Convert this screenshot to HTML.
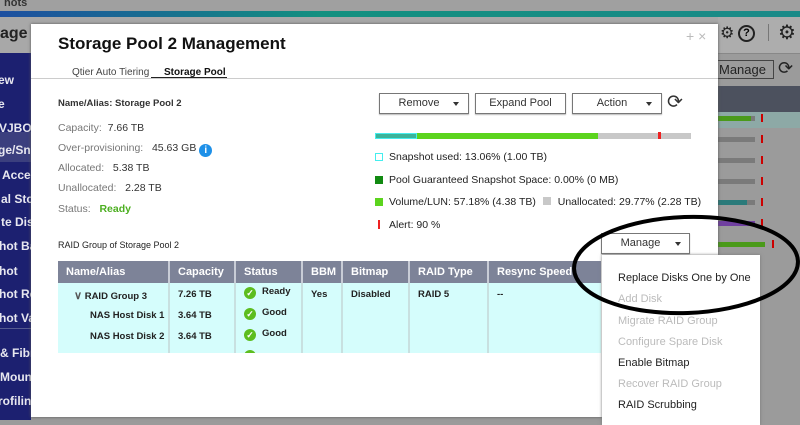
<!DOCTYPE html>
<html><head><style>
*{margin:0;padding:0;box-sizing:border-box}
body{width:800px;height:420px;overflow:hidden;position:relative;font-family:"Liberation Sans",sans-serif;background:#9b9b9b}
.a{position:absolute}
.side{overflow:hidden}
.side div{position:absolute;left:0;color:#e8e8f0;font-size:12px;font-weight:bold;white-space:nowrap}
.btn{position:absolute;height:21px;border:1px solid #777;background:#fff;font-size:11px;color:#333;text-align:center;line-height:19px;box-shadow:0 1px 1px #bbb}
.tri{display:inline-block;width:0;height:0;border-left:3px solid transparent;border-right:3px solid transparent;border-top:4px solid #333;position:absolute;top:8px}
.lbl{position:absolute;font-size:10.5px;color:#777;white-space:nowrap}
.val{color:#333}
.lg{position:absolute;font-size:10.5px;color:#222;left:389px;white-space:nowrap}
.sq{position:absolute;left:375px;width:8px;height:8px}
th{background:#7d8398;color:#fff;font-size:11px;font-weight:bold;text-align:left;height:22px;padding-left:8px;border-right:2px solid #c8ccd6;white-space:nowrap}
td{font-size:9.5px;font-weight:bold;color:#222;vertical-align:top;padding:6px 0 0 8px;white-space:nowrap;height:21px;border-right:2px solid #c8e0e0}
.mi{position:absolute;left:16px;font-size:11px;color:#222}
.dis{color:#bbb}
.ck{display:inline-block;width:12px;height:12px;border-radius:50%;background:#5cbd1e;color:#fff;font-size:9px;text-align:center;line-height:12px;margin-right:6px;vertical-align:-2px}
.rb{position:absolute;left:718px;height:5px;background:#7a7a7a;width:37px}
</style></head><body>
<div class="a" style="left:0;top:0;width:800px;height:11px;background:#a0a0a0"></div>
<div class="a" style="left:4px;top:-3px;font-size:11px;color:#333;font-weight:bold">hots</div>
<div class="a" style="left:0;top:11px;width:800px;height:6px;background:linear-gradient(90deg,#1d4fa0,#139080 40%,#1a8a88)"></div>
<div class="a" style="left:0;top:17px;width:800px;height:36px;background:#a8a8a8"></div>
<div class="a" style="left:0;top:25px;font-size:16px;color:#222;font-weight:bold">age &amp;</div>
<div class="a" style="left:718px;top:17px;width:82px;height:36px;background:#adadad"></div>
<div class="a" style="left:720px;top:23px;font-size:16px;color:#222">⚙</div>
<div class="a" style="left:738px;top:25px;width:17px;height:17px;border:2px solid #222;border-radius:50%;font-size:11px;text-align:center;line-height:13px;font-weight:bold">?</div>
<div class="a" style="left:768px;top:24px;width:1px;height:17px;background:#777"></div>
<div class="a" style="left:778px;top:20px;font-size:20px;color:#222">⚙</div>
<div class="a" style="left:718px;top:53px;width:82px;height:1px;background:#888"></div>
<div class="a" style="left:700px;top:60px;width:74px;height:19px;border:1px solid #444;font-size:13px;color:#222;padding-left:18px;line-height:17px">Manage</div>
<div class="a" style="left:778px;top:58px;font-size:18px;color:#222">⟳</div>
<div class="a" style="left:718px;top:86px;width:82px;height:26px;background:#4c515e"></div>
<div class="a" style="left:718px;top:112px;width:82px;height:16px;background:#8da9a6"></div>
<div class="rb" style="top:116px"></div><div class="a" style="left:718px;top:116px;width:33px;height:5px;background:#4a9a1a"></div>
<div class="rb" style="top:137px"></div><div class="rb" style="top:158px"></div><div class="rb" style="top:179px"></div><div class="rb" style="top:200px"></div><div class="rb" style="top:221px"></div><div class="rb" style="top:242px"></div>
<div class="a" style="left:718px;top:200px;width:29px;height:5px;background:#2a7a7a"></div>
<div class="a" style="left:718px;top:221px;width:37px;height:5px;background:#7040a0"></div>
<div class="a" style="left:718px;top:242px;width:47px;height:5px;background:#4a9a1a"></div>
<div class="a" style="left:761px;top:114px;width:2px;height:8px;background:#c00"></div>
<div class="a" style="left:761px;top:135px;width:2px;height:8px;background:#c00"></div>
<div class="a" style="left:761px;top:156px;width:2px;height:8px;background:#c00"></div>
<div class="a" style="left:761px;top:177px;width:2px;height:8px;background:#c00"></div>
<div class="a" style="left:761px;top:198px;width:2px;height:8px;background:#c00"></div>
<div class="a" style="left:761px;top:219px;width:2px;height:8px;background:#c00"></div>
<div class="a" style="left:772px;top:240px;width:2px;height:8px;background:#c00"></div>
<div class="a side" style="left:0;top:53px;width:31px;height:367px;background:#1c2070">
<div style="top:79px;left:0;width:31px;height:30px;background:#3b3f7e"></div>
<div style="top:20px;left:-2px">ew</div><div style="top:44px;left:-2px">e</div><div style="top:68px;left:-1px">VJBOD</div>
<div style="top:90px;left:-2px">ge/Snap</div><div style="top:115px;left:2px">Accele</div><div style="top:139px;left:1px">al Stor</div>
<div style="top:162px;left:1px">te Disk</div><div style="top:186px;left:-1px">hot Bac</div><div style="top:211px;left:-1px">hot</div>
<div style="top:234px;left:-1px">hot Re</div><div style="top:258px;left:-1px">hot Va</div>
<div style="top:275px;width:31px;height:1px;background:#555a90"></div>
<div style="top:293px;left:0">&amp; Fibre</div><div style="top:317px;left:0">Mount</div><div style="top:341px;left:-2px">rofiling</div>
</div>
<div class="a" style="left:31px;top:24px;width:687px;height:393px;background:#fff;box-shadow:0 0 3px #555"></div>
<div class="a" style="left:58px;top:34px;font-size:17px;font-weight:bold;color:#111">Storage Pool 2 Management</div>
<div class="a" style="left:686px;top:28px;font-size:14px;color:#bbb">+ ×</div>
<div class="a" style="left:72px;top:67px;font-size:10px;color:#444">Qtier Auto Tiering</div>
<div class="a" style="left:164px;top:67px;font-size:10px;color:#111;font-weight:bold">Storage Pool</div>
<div class="a" style="left:151px;top:77px;width:76px;height:2px;background:#222"></div>
<div class="a" style="left:31px;top:78px;width:687px;height:1px;background:#ccc"></div>
<div class="lbl" style="left:58px;top:98px;color:#333;font-size:9.5px;font-weight:bold">Name/Alias: Storage Pool 2</div>
<div class="lbl" style="left:58px;top:122px">Capacity: &nbsp;<span class="val">7.66 TB</span></div>
<div class="lbl" style="left:58px;top:142px">Over-provisioning: &nbsp;&nbsp;<span class="val">45.63 GB</span> <span style="display:inline-block;width:13px;height:13px;border-radius:50%;background:#1e90e8;color:#fff;font-size:10px;font-weight:bold;text-align:center;line-height:13px;vertical-align:-2px">i</span></div>
<div class="lbl" style="left:58px;top:162px">Allocated: &nbsp;&nbsp;<span class="val">5.38 TB</span></div>
<div class="lbl" style="left:58px;top:182px">Unallocated: &nbsp;&nbsp;<span class="val">2.28 TB</span></div>
<div class="lbl" style="left:58px;top:203px">Status: &nbsp;&nbsp;<span style="color:#4caf20;font-weight:bold">Ready</span></div>
<div class="btn" style="left:379px;top:93px;width:90px;padding-right:10px">Remove<span class="tri" style="left:73px"></span></div>
<div class="btn" style="left:475px;top:93px;width:91px">Expand Pool</div>
<div class="btn" style="left:572px;top:93px;width:90px;padding-right:10px">Action<span class="tri" style="left:73px"></span></div>
<div class="a" style="left:667px;top:91px;font-size:19px;color:#333">⟳</div>
<div class="a" style="left:375px;top:133px;width:316px;height:6px;background:#c8c8c8"></div>
<div class="a" style="left:375px;top:133px;width:42px;height:6px;background:#3bb39a;border:1px solid #4ee"></div>
<div class="a" style="left:417px;top:133px;width:181px;height:6px;background:#5cd41e"></div>
<div class="a" style="left:658px;top:132px;width:3px;height:7px;background:#e22"></div>
<div class="sq" style="top:153px;border:1.5px solid #4ee;background:#fff"></div>
<div class="lg" style="top:151px">Snapshot used: 13.06% (1.00 TB)</div>
<div class="sq" style="top:176px;background:#118a11"></div>
<div class="lg" style="top:174px">Pool Guaranteed Snapshot Space: 0.00% (0 MB)</div>
<div class="sq" style="top:198px;background:#5cd41e"></div>
<div class="lg" style="top:196px">Volume/LUN: 57.18% (4.38 TB) <span style="display:inline-block;width:8px;height:8px;background:#c8c8c8;margin:0 4px"></span> Unallocated: 29.77% (2.28 TB)</div>
<div class="a" style="left:378px;top:220px;width:2px;height:9px;background:#e22"></div>
<div class="lg" style="top:219px">Alert: 90 %</div>
<div class="a" style="left:58px;top:240px;font-size:9px;color:#222">RAID Group of Storage Pool 2</div>
<div class="btn" style="left:601px;top:233px;width:89px;padding-right:10px">Manage<span class="tri" style="left:73px"></span></div>
<div class="a" style="left:58px;top:261px;width:543px;height:92px;background:#d5fdfc;overflow:hidden">
<table style="width:543px;border-collapse:collapse;table-layout:fixed">
<tr><th style="width:111px">Name/Alias</th><th style="width:66px">Capacity</th><th style="width:67px">Status</th><th style="width:40px">BBM</th><th style="width:67px">Bitmap</th><th style="width:79px">RAID Type</th><th style="border-right:0">Resync Speed</th></tr>
<tr><td style="padding-left:16px"><span style="font-size:11px;color:#555">∨</span> RAID Group 3</td><td>7.26 TB</td><td style="padding-top:3px"><span class="ck">✓</span>Ready</td><td>Yes</td><td>Disabled</td><td>RAID 5</td><td style="border:0">--</td></tr>
<tr><td style="padding-left:32px">NAS Host Disk 1</td><td>3.64 TB</td><td style="padding-top:3px"><span class="ck">✓</span>Good</td><td></td><td></td><td></td><td style="border:0"></td></tr>
<tr><td style="padding-left:32px">NAS Host Disk 2</td><td>3.64 TB</td><td style="padding-top:3px"><span class="ck">✓</span>Good</td><td></td><td></td><td></td><td style="border:0"></td></tr>
<tr><td></td><td></td><td style="padding-top:3px"><span class="ck">✓</span></td><td></td><td></td><td></td><td style="border:0"></td></tr>
</table></div>
<div class="a" style="left:602px;top:255px;width:158px;height:170px;background:#fff;box-shadow:0 0 3px #777">
<div class="mi" style="top:17px">Replace Disks One by One</div>
<div class="mi dis" style="top:38px">Add Disk</div>
<div class="mi dis" style="top:60px">Migrate RAID Group</div>
<div class="mi dis" style="top:81px">Configure Spare Disk</div>
<div class="mi" style="top:102px">Enable Bitmap</div>
<div class="mi dis" style="top:123px">Recover RAID Group</div>
<div class="mi" style="top:144px">RAID Scrubbing</div>
</div>
<svg class="a" style="left:0;top:0" width="800" height="420"><ellipse cx="686" cy="265" rx="112" ry="48" fill="none" stroke="#000" stroke-width="4" transform="rotate(-2 686 265)"/></svg>
</body></html>
